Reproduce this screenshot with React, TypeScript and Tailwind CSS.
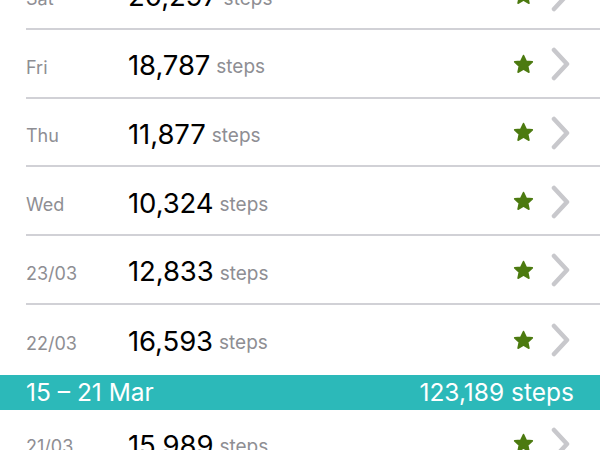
import React from "react";

type Day = { label: string; steps: string };

const week: Day[] = [
  { label: "Sat", steps: "20,297" },
  { label: "Fri", steps: "18,787" },
  { label: "Thu", steps: "11,877" },
  { label: "Wed", steps: "10,324" },
  { label: "23/03", steps: "12,833" },
  { label: "22/03", steps: "16,593" },
];

const nextWeek: Day[] = [{ label: "21/03", steps: "15,989" }];

const StarIcon: React.FC = () => (
  <svg width="23" height="23" viewBox="0 0 24 24" className="shrink-0 -mt-[3px]">
    <path
      d="M12 2.6l2.75 5.9 6.45.75-4.8 4.4 1.3 6.4L12 16.85 6.3 20.05l1.3-6.4-4.8-4.4 6.45-.75z"
      fill="#4c7a10"
      stroke="#4c7a10"
      strokeWidth="1.6"
      strokeLinejoin="round"
    />
  </svg>
);

const Chevron: React.FC = () => (
  <svg width="22" height="34" viewBox="0 0 22 34" className="shrink-0 -mt-[3px]">
    <polyline
      points="4,3 17,17 4,31"
      fill="none"
      stroke="#c8c8cc"
      strokeWidth="4.5"
      strokeLinecap="round"
      strokeLinejoin="round"
    />
  </svg>
);

const DayRow: React.FC<{ day: Day; last?: boolean }> = ({ day, last }) => (
  <div className="flex flex-col h-[68.75px]">
    <div className="flex flex-1 items-center pt-[5px] pl-[26px] pr-[28px]">
      <span className="w-[102px] pt-[3px] text-[18px] text-[#8e8e93]">{day.label}</span>
      <span className="text-[27.5px] text-black tracking-[-0.1px]">{day.steps}</span>
      <span className="ml-[6px] mt-[4px] text-[19px] text-[#8e8e93]">steps</span>
      <div className="ml-auto flex items-center gap-[15px]">
        <StarIcon />
        <Chevron />
      </div>
    </div>
    {!last && <div className="ml-[26px] h-[2px] bg-[#d1d1d6]" />}
  </div>
);

const App: React.FC = () => {
  return (
    <div
      className="w-[600px] h-[450px] overflow-hidden bg-white"
      style={{ fontFamily: "Inter, 'Noto Sans', sans-serif" }}
    >
      <div className="-mt-[39px] flex flex-col">
        {week.map((d, i) => (
          <DayRow key={d.label} day={d} last={i === week.length - 1} />
        ))}
        <div className="mt-[1px] flex h-[35px] items-center justify-between bg-[#2cb9b9] px-[26px] text-white">
          <span className="text-[24.5px]">15 – 21 Mar</span>
          <span className="text-[24.5px]">123,189 steps</span>
        </div>
        {nextWeek.map((d) => (
          <DayRow key={d.label} day={d} />
        ))}
      </div>
    </div>
  );
};

export default App;
